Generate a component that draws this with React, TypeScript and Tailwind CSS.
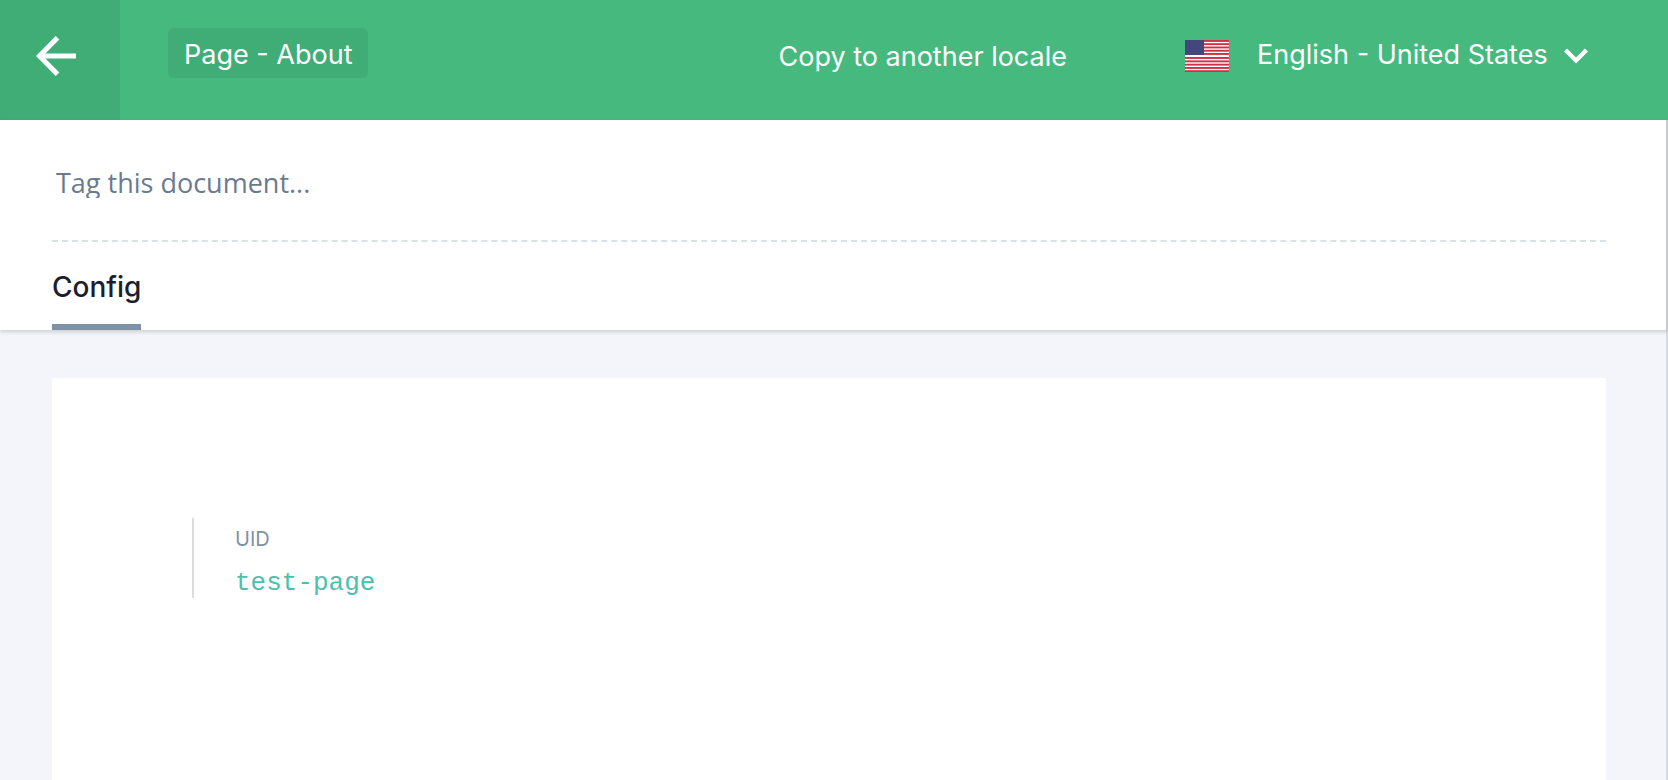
function BackArrow() {
  return (
    <svg width="40" height="40" viewBox="0 0 40 40" fill="none" stroke="currentColor" strokeWidth="5" aria-hidden="true">
      <path d="M40 20H4" />
      <path d="M21.5 1.8L3.5 20L21.5 38.2" />
    </svg>
  );
}

function Chevron() {
  return (
    <svg className="mt-1" width="24" height="16" viewBox="0 0 24 16" fill="none" stroke="currentColor" strokeWidth="4.4" aria-hidden="true">
      <path d="M1.5 2L12 12.5L22.5 2" />
    </svg>
  );
}

function UsFlag() {
  const stripes = [0, 3.2, 6.5, 9.8, 13, 17, 20.4, 23.7, 27, 30.2];
  return (
    <svg width="44" height="32" viewBox="0 0 44 32" aria-hidden="true">
      <rect width="44" height="32" fill="#fff" />
      {stripes.map((y) => (
        <rect key={y} y={y} width="44" height="1.9" fill="#d02f48" />
      ))}
      <rect width="19" height="15" fill="#46467f" />
    </svg>
  );
}

export default function App() {
  return (
    <div className="flex min-h-screen flex-col bg-[#f4f5fa] font-['Inter',sans-serif]">
      <header className="flex h-[120px] items-stretch bg-[#45b97e] text-[27px] leading-9 text-white">
        <button type="button" aria-label="Back" className="flex w-[120px] items-center bg-[#40ad76] pb-2 pl-9">
          <BackArrow />
        </button>
        <div className="flex flex-1 items-start pr-20 pl-12">
          <h1 className="mt-7 flex h-[50px] items-center rounded-md bg-[#40ad76] px-4 pt-1">Page - About</h1>
          <div className="ml-auto flex items-start gap-[118px]">
            <button type="button" className="mt-[39px]">Copy to another locale</button>
            <div className="mt-[35px] flex items-center">
              <div className="mt-1">
                <UsFlag />
              </div>
              <select aria-label="Locale" className="ml-7 appearance-none bg-transparent pt-0.5 pr-4" defaultValue="en-us">
                <option value="en-us">English - United States</option>
              </select>
              <Chevron />
            </div>
          </div>
        </div>
      </header>

      <div className="flex flex-1 flex-col border-r-2 border-[#d9dbe2]">
        <div className="-mr-0.5 border-r-2 border-[#c8cad0] bg-white pr-[60px] pl-[52px] shadow-[0_2px_4px_rgba(0,0,0,0.16)]">
          <div className="flex h-[122px] items-start border-b-2 border-dashed border-[#d8e0e8] pt-12 pl-1">
            <input
              type="text"
              aria-label="Tags"
              placeholder="Tag this document..."
              className="h-[30px] w-full bg-transparent pb-0.5 font-['Open_Sans',sans-serif] text-[27px] leading-7 outline-none placeholder:text-[#6b7a8f] placeholder:opacity-100"
            />
          </div>
          <nav className="flex h-[88px]">
            <a href="#config" className="flex h-full items-center border-b-[6px] border-[#7f91a4] pt-2 text-[28px] leading-9 font-medium text-[#1b1e2e]">
              Config
            </a>
          </nav>
        </div>

        <main className="mt-12 mr-[60px] ml-[52px] flex-1 bg-white px-[140px] pt-[140px]">
          <div className="flex h-20 flex-col border-l-2 border-[#d9dde2] pt-[9px] pl-[41px]">
            <label htmlFor="uid" className="text-xl leading-6 text-[#8091a5]">UID</label>
            <input
              id="uid"
              type="text"
              defaultValue="test-page"
              className="mt-4 bg-transparent font-['Liberation_Mono',monospace] text-[26px] leading-8 text-[#4dbfad] outline-none"
            />
          </div>
        </main>
      </div>
    </div>
  );
}
